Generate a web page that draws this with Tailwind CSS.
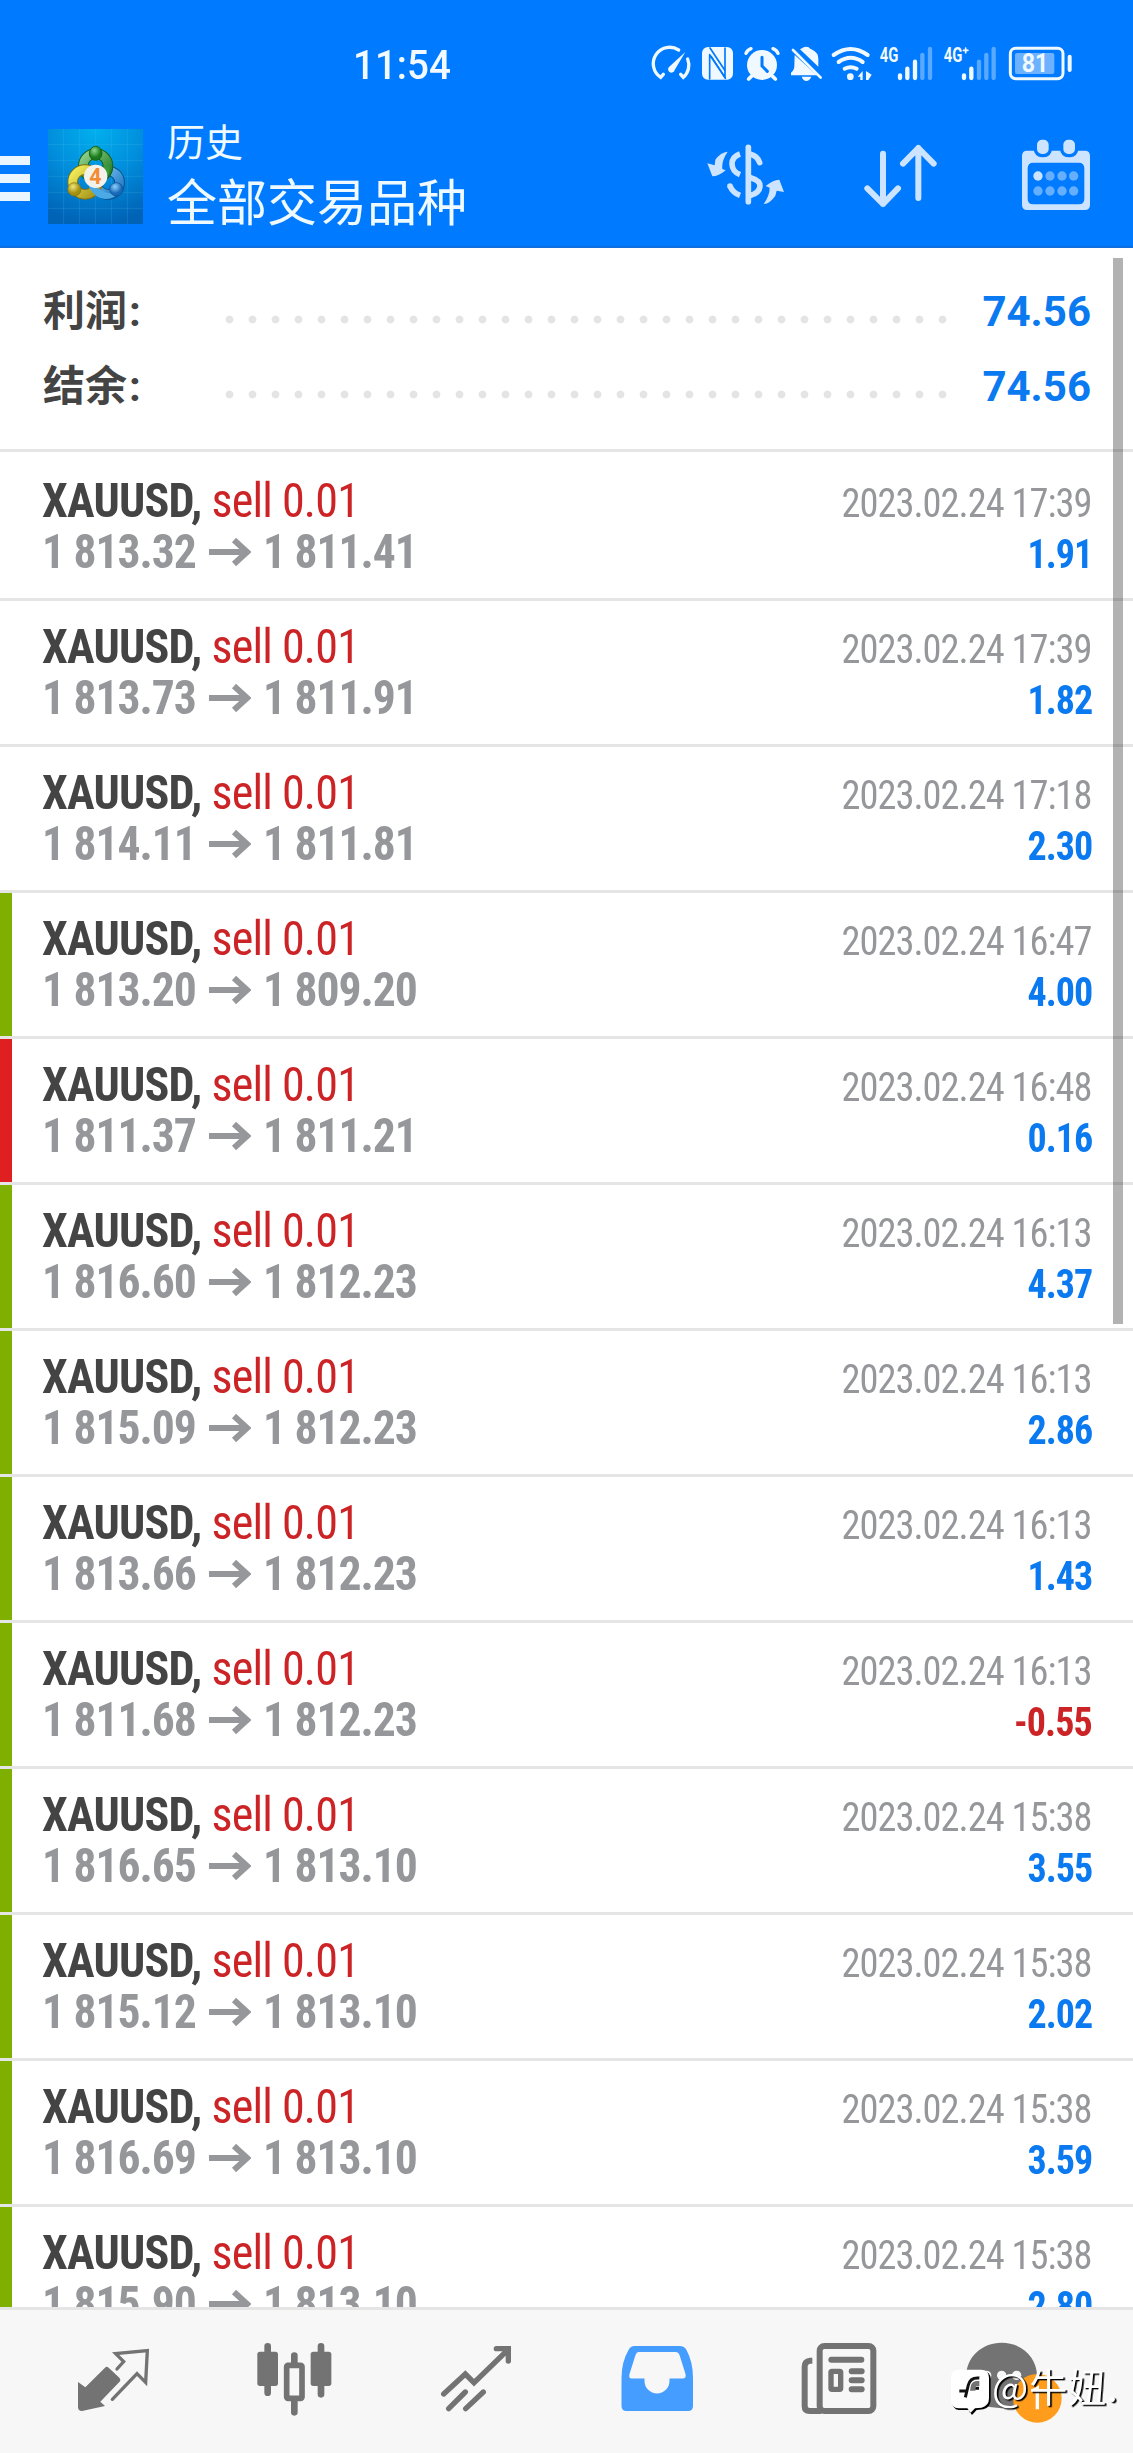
<!DOCTYPE html>
<html lang="zh-CN">
<head>
<meta charset="utf-8">
<title>历史</title>
<script src="https://cdn.jsdelivr.net/npm/@tailwindcss/browser@4"></script>
</head>
<body class="bg-white">
<div class="w-[1133px] h-[2453px] flex flex-col overflow-hidden relative font-['Roboto','Noto_Sans_CJK_SC',sans-serif]">

  <header class="h-[248px] shrink-0 bg-[#007aff] border-b-2 border-[#0f6fdc] flex flex-col">
    <!-- status bar -->
    <div class="h-[117px] flex justify-between items-start pl-[353px]">
      <div class="pt-[41px] text-[41px] leading-[48px] font-medium text-[#f2faff] origin-left scale-x-[0.94]">11:54</div>
      <svg class="w-[513px] h-[80px] mt-[20px]" viewBox="0 0 1539 240" fill="none" stroke-linecap="round">
        <g stroke="#f0f9ff" stroke-width="10">
          <path d="M176 90A49 49 0 0 0 122 172L130 163M203 117A49 49 0 0 1 190 172L182 163"/>
        </g>
        <path d="M196 96L147 141A10 10 0 1 0 164 150Z" fill="#f0f9ff"/>
        <rect x="246" y="81" width="93" height="98" rx="18" fill="#f0f9ff"/>
        <path d="M269 177V104L315 172V84" stroke="#007aff" stroke-width="5" stroke-linejoin="round"/>
        <path d="M270 84L314 150M274 110L316 175" stroke="#007aff" stroke-width="5"/>
        <circle cx="426" cy="135" r="45" fill="#f0f9ff"/>
        <path d="M394 169L386 177M458 169L466 177" stroke="#f0f9ff" stroke-width="11"/>
        <path d="M378 100Q382 90 393 86M474 100Q470 90 459 86" stroke="#f0f9ff" stroke-width="10"/>
        <path d="M426 112V138L442 154" stroke="#007aff" stroke-width="9"/>
        <path d="M540 88Q549 84 551 82Q558 79 566 82Q570 87 577 89Q595 98 595 116V140ZM524 105L591 166H513V158Q523 150 523 139Z" fill="#f0f9ff"/>
        <path d="M545 170H574Q568 183 559 183Q550 183 545 170Z" fill="#f0f9ff"/>
        <path d="M519 90L602 173" stroke="#f0f9ff" stroke-width="8"/>
        <g stroke="#f0f9ff" stroke-width="12">
          <path d="M641 105Q692 69 743 105M656 126Q692 101 728 126M674 146Q692 137 710 146"/>
        </g>
        <circle cx="691" cy="170" r="10" fill="#f0f9ff"/>
        <path d="M728 153V180H721V170H713ZM738 153L755 164L745 180H738Z" fill="#f0f9ff"/>
        <g stroke-width="13">
          <path d="M840 166V174M862 146V174M885 125V174M1032 166V174M1054 146V174" stroke="#f0f9ff"/>
          <path d="M907 105V174M930 87V174M1077 125V174M1099 105V174M1121 87V174" stroke="#58a9ff"/>
        </g>
        <g fill="#f0f9ff" font-family="Roboto" font-weight="700">
          <text x="779" y="125" font-size="60" textLength="56" lengthAdjust="spacingAndGlyphs">4G</text>
          <text x="971" y="125" font-size="60" textLength="56" lengthAdjust="spacingAndGlyphs">4G</text>
        </g>
        <path d="M1030 91H1044M1037 84V98" stroke="#f0f9ff" stroke-width="5"/>
        <rect x="1171" y="85" width="158" height="91" rx="16" stroke="#f0f9ff" stroke-width="9"/>
        <rect x="1185" y="99" width="118" height="63" rx="6" fill="#6cb2ff"/>
        <path d="M1349 110V150" stroke="#f0f9ff" stroke-width="12"/>
        <text x="1205" y="157" font-size="76" font-family="Roboto" font-weight="700" fill="#f0f9ff" textLength="80" lengthAdjust="spacingAndGlyphs">81</text>
      </svg>
    </div>
    <!-- title bar -->
    <div class="flex-1 flex items-start">
      <div class="w-[30px] mt-[39px] flex flex-col gap-[9px]">
        <div class="h-[9px] bg-[#e9f6ff]"></div>
        <div class="h-[9px] bg-[#e9f6ff]"></div>
        <div class="h-[9px] bg-[#e9f6ff]"></div>
      </div>
      <svg class="w-[95px] h-[95px] ml-[18px] mt-[12px]" viewBox="15 15 285 285">
        <defs>
          <radialGradient id="bg" cx=".5" cy="0" r="1"><stop offset="0" stop-color="#00b0ee"/><stop offset=".5" stop-color="#018edc"/><stop offset="1" stop-color="#0063b6"/></radialGradient>
          <linearGradient id="g" x1="0" y1="0" x2="1" y2="1"><stop offset="0" stop-color="#8fd08a"/><stop offset="1" stop-color="#1d7a1f"/></linearGradient>
          <linearGradient id="y" x1="0" y1="0" x2="1" y2="1"><stop offset="0" stop-color="#f4ee5a"/><stop offset="1" stop-color="#a49318"/></linearGradient>
          <linearGradient id="b" x1="0" y1="0" x2="1" y2="1"><stop offset="0" stop-color="#7cc6f5"/><stop offset="1" stop-color="#1b74c0"/></linearGradient>
          <radialGradient id="gb" cx=".4" cy=".3"><stop offset="0" stop-color="#8fd88c"/><stop offset="1" stop-color="#187a1c"/></radialGradient>
          <radialGradient id="yb" cx=".4" cy=".3"><stop offset="0" stop-color="#efe67a"/><stop offset="1" stop-color="#a38f10"/></radialGradient>
          <radialGradient id="bb" cx=".4" cy=".3"><stop offset="0" stop-color="#8fd0fa"/><stop offset="1" stop-color="#1668b8"/></radialGradient>
        </defs>
        <rect x="15" y="15" width="285" height="285" fill="url(#bg)"/>
        <path d="M62 15V300M109 15V300M157 15V300M205 15V300M253 15V300M15 62H300M15 110H300M15 157H300M15 205H300M15 253H300" stroke="#5cc8f5" stroke-opacity=".28" stroke-width="2"/>
        <circle cx="195" cy="176" r="35" fill="none" stroke="#0b4f8c" stroke-width="32"/>
        <circle cx="195" cy="176" r="35" fill="none" stroke="url(#b)" stroke-width="26"/>
        <circle cx="158" cy="126" r="37" fill="none" stroke="#14601c" stroke-width="32"/>
        <circle cx="158" cy="126" r="37" fill="none" stroke="url(#g)" stroke-width="26"/>
        <circle cx="126" cy="174" r="37" fill="none" stroke="#7c7014" stroke-width="32"/>
        <circle cx="126" cy="174" r="37" fill="none" stroke="url(#y)" stroke-width="26"/>
        <path d="M138 176Q150 185 158 190L180 200Q196 212 220 205L214 218Q165 240 138 190Z" fill="#4ba9e6"/>
        <path d="M176 130L200 128L198 150L178 165Z" fill="#3c9a3c"/>
        <ellipse cx="158" cy="88" rx="19" ry="21" fill="url(#gb)" stroke="#156619" stroke-width="3"/>
        <circle cx="94" cy="196" r="20" fill="url(#yb)" stroke="#7c7014" stroke-width="2"/>
        <circle cx="220" cy="196" r="20" fill="url(#bb)" stroke="#0d4f90" stroke-width="2"/>
        <circle cx="158" cy="157" r="35" fill="#f3f1ec"/>
        <text x="157" y="180" font-family="Roboto" font-weight="700" font-size="64" text-anchor="middle" fill="#f38b33">4</text>
      </svg>
      <div class="ml-[24px] mt-[3px] text-[#eefaff] whitespace-nowrap">
        <div class="text-[38px] leading-[46px]">历史</div>
        <div class="text-[50px] leading-[70px] mt-[3px]">全部交易品种</div>
      </div>
      <div class="flex ml-auto mt-[14px] gap-[76px] pr-[35px]">
        <svg class="w-[82px] h-[80px]" viewBox="132 63 246 240" fill="none" stroke="#cce4ff" stroke-width="17" stroke-linecap="round">
          <path d="M265 112V275"/>
          <path d="M272 133Q292 138 299 158M272 203Q302 212 300 229Q298 248 272 256"/>
          <path d="M240 132Q216 140 216 162Q217 185 240 194M240 256Q218 248 210 228" stroke-linecap="butt"/>
          <circle cx="210" cy="228" r="8.500" fill="#cce4ff" stroke="none"/>
          <path d="M203 125Q182 127 166 149L164 166L142 160L157 199Q176 199 197 181L187 177Q184 153 203 125ZM311 282Q330 281 346 257L350 242L372 246L358 209Q338 210 317 228L329 233Q329 256 311 282Z" fill="#cce4ff" stroke="none"/>
        </svg>
        <svg class="w-[80px] h-[80px]" viewBox="606 63 240 240" fill="none" stroke="#cce4ff" stroke-width="18" stroke-linecap="round" stroke-linejoin="round">
          <path d="M669 131V282M622 235L669 282L714 235M775 264V114M729 161L775 114L821 161"/>
        </svg>
        <svg class="w-[80px] h-[80px]" viewBox="1074 63 240 240">
          <path d="M1102 122H1274Q1290 122 1290 138V284Q1290 300 1274 300H1102Q1086 300 1086 284V138Q1086 122 1102 122ZM1120 158Q1103 158 1103 175V266Q1103 283 1120 283H1256Q1273 283 1273 266V175Q1273 158 1256 158Z" fill="#cce4ff" fill-rule="evenodd"/>
          <g fill="#cce4ff" stroke="#007aff" stroke-width="10">
            <rect x="1126" y="84" width="45" height="53" rx="20"/><rect x="1205" y="84" width="45" height="53" rx="20"/>
          </g>
          <circle cx="1134" cy="198" r="14" fill="#cce4ff"/>
          <g fill="#66afff"><circle cx="1170" cy="198" r="14"/><circle cx="1206" cy="198" r="14"/><circle cx="1241" cy="198" r="14"/><circle cx="1134" cy="243" r="14"/><circle cx="1170" cy="243" r="14"/><circle cx="1206" cy="243" r="14"/><circle cx="1241" cy="243" r="14"/></g>
        </svg>
      </div>
    </div>
  </header>

  <main class="flex-1 min-h-0 overflow-hidden relative">
    <!-- totals -->
    <section class="h-[201px] pt-[26px] pl-[43px] pr-[42px] text-[42px] font-bold">
      <div class="h-[75px] flex items-center">
        <div class="w-[175px] text-[#444] leading-[75px]">利润<span class="ml-[2px]">:</span></div>
        <div class="w-[736px] h-[23px] mt-[16px] bg-[radial-gradient(circle,#e4e4e4_3.5px,transparent_4.3px)] bg-[length:23px_23px]"></div>
        <div class="ml-auto text-[#0b7af0] leading-[75px]">74.56</div>
      </div>
      <div class="h-[75px] flex items-center">
        <div class="w-[175px] text-[#444] leading-[75px]">结余<span class="ml-[2px]">:</span></div>
        <div class="w-[736px] h-[23px] mt-[16px] bg-[radial-gradient(circle,#e4e4e4_3.5px,transparent_4.3px)] bg-[length:23px_23px]"></div>
        <div class="ml-auto text-[#0b7af0] leading-[75px]">74.56</div>
      </div>
    </section>
    <section id="deals"></section>
    <!-- scrollbar -->
    <div class="absolute right-[10px] top-[10px] w-[10px] h-[1066px] bg-black/30"></div>
  </main>

  <nav class="h-[146px] shrink-0 bg-[#f7f7f7] border-t-[3px] border-[#e5e5e5] px-[22.5px] pt-[30px] grid grid-cols-6 justify-items-center items-start relative">
    <svg class="w-[80px] h-[82px]" viewBox="42 45 240 246">
      <path d="M57 171L79 187L138 128Q143 122 149 128L181 158Q187 165 181 171L124 230L138 243L69 258Q57 258 57 247Z" fill="#737373"/>
      <path d="M174 132L194 110L170 86L265 77L260 172L234 146L160 223" fill="none" stroke="#737373" stroke-width="10" stroke-linecap="round"/>
    </svg>
    <svg class="w-[80px] h-[82px]" viewBox="584 45 240 246" fill="#737373">
      <rect x="594" y="80" width="62" height="103" rx="8"/><rect x="754" y="80" width="62" height="103" rx="8"/>
      <path d="M625 64V203M785 64V208M705 92V118M705 226V262" stroke="#737373" stroke-width="20" stroke-linecap="round"/>
      <rect x="682" y="121" width="46" height="99" rx="4" fill="#f7f7f7" stroke="#737373" stroke-width="17"/>
    </svg>
    <svg class="w-[80px] h-[82px]" viewBox="1128 45 240 246" fill="none" stroke="#737373" stroke-width="16" stroke-linecap="round">
      <path d="M1151 207L1216 147L1242 173L1345 73M1309 71H1345V108"/>
      <path d="M1166 251L1216 201M1217 251L1270 201"/>
    </svg>
    <svg class="w-[80px] h-[82px]" viewBox="617.500 2340 80 82">
      <path d="M635 2346H680Q685 2346 687 2350Q693.500 2362 693.500 2378V2406Q693.500 2411 688.500 2411H627Q622 2411 622 2406V2378Q622 2362 629 2350Q631 2346 635 2346Z" fill="#459dff"/>
      <path d="M639 2352H676Q679 2352 680 2355L686 2374Q687 2378.500 683 2378.500H670V2381A12.500 12.500 0 0 1 645 2381V2378.500H632Q629 2378.500 630 2374L636 2355Q637 2352 639 2352Z" fill="#f7f7f7"/>
    </svg>
    <svg class="w-[80px] h-[82px]" viewBox="-4 60 240 246" fill="none" stroke="#737373" stroke-width="18">
      <rect x="61" y="78" width="161" height="195" rx="14"/>
      <path d="M39 122H32Q16 124 16 140V258Q16 273 31 273H66"/>
      <path d="M96 119H186M157 154H187M157 181H187M157 208H187" stroke-linecap="round"/>
      <rect x="95" y="154" width="29" height="54" rx="3" stroke-width="16"/>
    </svg>
    <svg class="w-[80px] h-[82px] overflow-visible" viewBox="540 60 240 246">
      <path d="M605 68C665 68 711 112 711 168C711 225 665 265 605 265Q575 265 545 255L508 279Q520 250 520 235Q499 205 499 168C499 112 545 68 605 68Z" fill="#737373"/>
      <circle cx="560" cy="166" r="14" fill="#f7f7f7"/><circle cx="605" cy="166" r="14" fill="#f7f7f7"/><circle cx="650" cy="166" r="14" fill="#f7f7f7"/>
      <circle cx="712" cy="235" r="73" fill="#ff9c1b"/>
      <path d="M698 212L712 204V268" fill="none" stroke="#fff" stroke-width="10"/>
      <!-- watermark -->
      <path d="M476 154H548Q572 154 572 178V240Q572 262 550 268L530 270L516 285L506 270H476Q457 268 457 244V178Q457 154 476 154Z" fill="#000"/>
      <path d="M476 149H543Q567 149 567 173V235Q567 258 545 263L525 265L512 278L502 265H476Q453 263 453 239V173Q453 149 476 149Z" fill="#fff"/>
      <path d="M496 232L505 195Q511 171 538 174M478 213H502M514 205H537" fill="none" stroke="#111" stroke-width="9"/>
      <path d="M512 200Q514 181 538 183V198H528L526 212H510Z" fill="#737373"/>
      <text class="[filter:drop-shadow(5px_4px_0_#000)]" x="576" y="247" font-family="Noto Sans CJK SC" font-size="115" letter-spacing="2" fill="#fff">@牛妞.</text>
    </svg>
  </nav>
</div>

<script>
const deals = [
  ['1 813.32','1 811.41','17:39','1.91',''],
  ['1 813.73','1 811.91','17:39','1.82',''],
  ['1 814.11','1 811.81','17:18','2.30',''],
  ['1 813.20','1 809.20','16:47','4.00','g'],
  ['1 811.37','1 811.21','16:48','0.16','r'],
  ['1 816.60','1 812.23','16:13','4.37','g'],
  ['1 815.09','1 812.23','16:13','2.86','g'],
  ['1 813.66','1 812.23','16:13','1.43','g'],
  ['1 811.68','1 812.23','16:13','-0.55','g'],
  ['1 816.65','1 813.10','15:38','3.55','g'],
  ['1 815.12','1 813.10','15:38','2.02','g'],
  ['1 816.69','1 813.10','15:38','3.59','g'],
  ['1 815.90','1 813.10','15:38','2.80','g'],
];
const bars = { '': 'bg-white', g: 'bg-[#7fb000]', r: 'bg-[#e02020]' };
document.getElementById('deals').innerHTML = deals.map(([open, close, time, profit, mark], i) => `
  <div class="${i ? 'h-[146px]' : 'h-[149px] pt-[3px]'} border-t-[3px] border-[#e5e5e5] flex [font-stretch:75%]">
    <div class="w-[12px] ${bars[mark]}"></div>
    <div class="flex-1 pl-[30px] pr-[42px] pt-[20px]">
      <div class="flex justify-between items-baseline h-[51px] leading-[51px]">
        <div class="text-[48px] whitespace-pre origin-left scale-x-[0.96] tracking-[-0.8px]"><span class="font-bold text-[#444]">XAUUSD,</span><span class="text-[#cc2426]"> sell 0.01</span></div>
        <div class="text-[40px] text-[#96979b] origin-right scale-x-[0.96] tracking-[-1px] -mr-px">2023.02.24 ${time}</div>
      </div>
      <div class="flex items-baseline h-[51px] leading-[51px] font-bold">
        <div class="text-[48px] text-[#96979b] flex items-baseline">
          <span class="w-[167px] whitespace-nowrap origin-left scale-x-[0.95] tracking-[-1.1px]">${open}</span>
          <svg class="w-[42px] h-[28px] mr-[12px] self-center" viewBox="0 0 42 28" fill="none" stroke="#96979b" stroke-width="6"><path d="M0 14H38M25 2L38 14L25 26"/></svg>
          <span class="whitespace-nowrap origin-left scale-x-[0.95] tracking-[-1.1px]">${close}</span>
        </div>
        <div class="ml-auto text-[40px] origin-right scale-x-[0.95] tracking-[-1px] -mr-px ${profit[0] === '-' ? 'text-[#cc2426]' : 'text-[#0b7af0]'}">${profit}</div>
      </div>
    </div>
  </div>`).join('');
</script>
</body>
</html>
